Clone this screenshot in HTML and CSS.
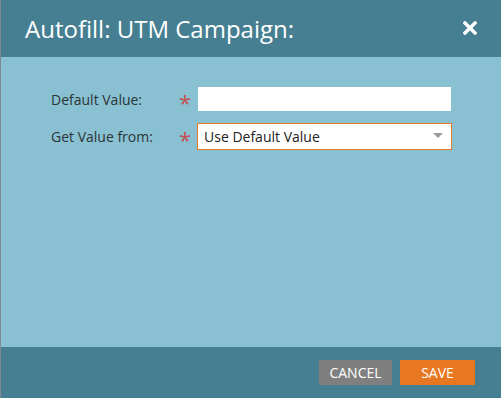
FILE: index.html
```html
<!DOCTYPE html>
<html lang="en">
<head>
    <meta charset="UTF-8">
    <title>Autofill: UTM Campaign</title>
    <link rel="stylesheet" href="styles.css">
</head>
<body>
    <div class="dialog">
        <!-- header -->
        <div class="dialog-header">
            <h1>Autofill: UTM Campaign:</h1>
            <span class="close-btn">
                <svg width="14" height="14" viewBox="0 0 14 14">
                    <path d="M2 2 L12 12 M12 2 L2 12" stroke="#fff" stroke-width="3.4" stroke-linecap="square"/>
                </svg>
            </span>
        </div>

        <!-- form -->
        <div class="dialog-body">
            <div class="form-row">
                <label>Default Value:</label>
                <span class="required">*</span>
                <input type="text" class="text-input">
            </div>
            <div class="form-row">
                <label>Get Value from:</label>
                <span class="required">*</span>
                <div class="select-box">
                    <span>Use Default Value</span>
                    <span class="caret"></span>
                </div>
            </div>
        </div>

        <!-- footer buttons -->
        <div class="dialog-footer">
            <button class="cancel-btn">CANCEL</button>
            <button class="save-btn">SAVE</button>
        </div>
    </div>
</body>
</html>
```

FILE: styles.css
```css
* {
    margin: 0;
    padding: 0;
    box-sizing: border-box;
}

body {
    font-family: "Open Sans", "Liberation Sans", sans-serif;
    width: 501px;
    height: 398px;
    overflow: hidden;
}

.dialog {
    display: flex;
    flex-direction: column;
    height: 398px;
    border-left: 1px solid #7d8a8f;
    background-color: #89c1d3;
}

/* header */
.dialog-header {
    height: 57px;
    background-color: #467f91;
    display: flex;
    align-items: center;
    justify-content: space-between;
    padding: 0 24px 0 24px;
}

.dialog-header h1 {
    font-weight: normal;
    font-size: 24px;
    color: #fff;
    margin-top: -1px;
}

.close-btn {
    display: flex;
    margin-top: -1px;
}

/* body */
.dialog-body {
    flex: 1;
    padding-top: 30px;
}

.form-row {
    display: flex;
    align-items: center;
    height: 24px;
    margin-bottom: 12px;
}

.form-row + .form-row {
    height: 27px;
}

.form-row label {
    width: 174px;
    padding-left: 50px;
    font-size: 14px;
    color: #2b3437;
    white-space: nowrap;
    flex-shrink: 0;
}

.required {
    width: 20px;
    font-size: 22px;
    color: #c2504f;
    line-height: 1;
    padding-top: 5px;
    flex-shrink: 0;
    text-align: center;
}

.text-input {
    width: 253px;
    height: 24px;
    margin-left: 3px;
    border: none;
    background: #fff;
    outline: none;
}

.select-box {
    width: 255px;
    height: 27px;
    margin-left: 2px;
    background: #fff;
    border: 1px solid #e87722;
    display: flex;
    align-items: center;
    justify-content: space-between;
    padding: 0 8px 0 6px;
    font-size: 14px;
    color: #222;
}

.caret {
    width: 0;
    height: 0;
    border-left: 5px solid transparent;
    border-right: 5px solid transparent;
    border-top: 5px solid #9a9a9a;
    margin-bottom: 2px;
}

/* footer */
.dialog-footer {
    height: 51px;
    background-color: #467f91;
    display: flex;
    justify-content: flex-end;
    align-items: flex-start;
    gap: 8px;
    padding: 13px 26px 0 0;
}

button {
    height: 25px;
    border: none;
    font-family: "Open Sans", "Liberation Sans", sans-serif;
    font-size: 14px;
    color: #fff;
}

.cancel-btn {
    width: 73px;
    background-color: #7f7f7f;
}

.save-btn {
    width: 75px;
    background-color: #e87722;
}
```
